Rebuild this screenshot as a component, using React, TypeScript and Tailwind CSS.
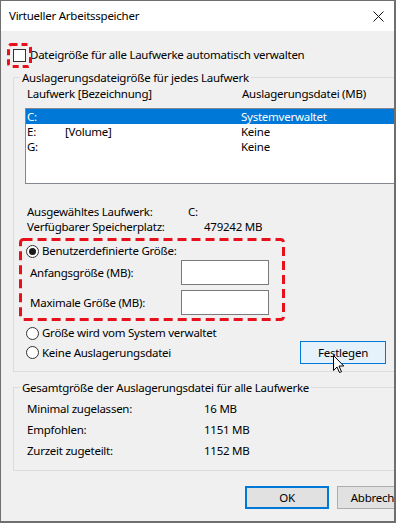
const Radio = ({ checked }: { checked?: boolean }) => (
  <span className="flex h-[13px] w-[13px] shrink-0 items-center justify-center rounded-full border border-[#333] bg-white">
    {checked && <span className="h-[7px] w-[7px] rounded-full bg-[#1a1a1a]" />}
  </span>
);

const DashedBox = ({ w, h, dash }: { w: number; h: number; dash: string }) => (
  <svg className="pointer-events-none absolute left-0 top-0" width={w} height={h}>
    <rect
      x={1.5}
      y={1.5}
      width={w - 3}
      height={h - 3}
      rx={3}
      fill="none"
      stroke="#e8111b"
      strokeWidth={3}
      strokeDasharray={dash}
    />
  </svg>
);

const drives = [
  { d: "C:", label: "", size: "Systemverwaltet", selected: true },
  { d: "E:", label: "[Volume]", size: "Keine" },
  { d: "G:", label: "", size: "Keine" },
];

const totals = [
  ["Minimal zugelassen:", "16 MB"],
  ["Empfohlen:", "1151 MB"],
  ["Zurzeit zugeteilt:", "1152 MB"],
];

export default function App() {
  return (
    <div className="h-[523px] w-[396px] overflow-hidden bg-white font-['Noto_Sans',sans-serif] text-[11.5px] tracking-[-0.25px] text-black">
      <div className="flex h-[523px] w-[396px] flex-col overflow-hidden border-b-2 border-l border-r-2 border-t border-[#6f6f6f] bg-[#f0f0f0]">
        {/* title bar */}
        <div className="flex h-[30px] shrink-0 items-center justify-between bg-white pl-[8px] pr-[10px]">
          <span className="leading-[16px]">Virtueller Arbeitsspeicher</span>
          <svg width="11" height="11" viewBox="0 0 11 11">
            <path d="M0.5 0.5 L10.5 10.5 M10.5 0.5 L0.5 10.5" stroke="#111" strokeWidth="1" />
          </svg>
        </div>

        <div className="w-[420px] pl-[12px]">
          {/* auto checkbox */}
          <div className="mt-[16px] flex h-[16px] items-center gap-[4px] leading-[16px]">
            <span className="relative h-[13px] w-[13px] shrink-0 border border-[#333] bg-white">
              <span className="absolute -left-[7px] -top-[7px]">
                <span className="relative block h-[25px] w-[25px]">
                  <DashedBox w={25} h={25} dash="6 4" />
                </span>
              </span>
            </span>
            <span>Dateigröße für alle Laufwerke automatisch verwalten</span>
          </div>

          {/* per drive group */}
          <fieldset className="mt-[7px] w-[400px] border border-[#dcdcdc] pb-[7px] pl-[6px]">
            <legend className="px-[2px] leading-[15px]">Auslagerungsdateigröße für jedes Laufwerk</legend>
            <div className="ml-[7px] mt-[1px] flex leading-[16px]">
              <span className="w-[215px]">Laufwerk [Bezeichnung]</span>
              <span>Auslagerungsdatei (MB)</span>
            </div>
            <div className="ml-[5px] mt-[6px] h-[76px] w-[380px] border border-[#828790] bg-white">
              {drives.map((r) => (
                <div
                  key={r.d}
                  className={`flex h-[15px] pl-[1px] leading-[15px] ${r.selected ? "bg-[#0078d7] text-white" : ""}`}
                >
                  <span className="w-[38px]">{r.d}</span>
                  <span className="w-[176px]">{r.label}</span>
                  <span>{r.size}</span>
                </div>
              ))}
            </div>

            <div className="ml-[7px] mt-[20px] leading-[15px]">
              <div className="flex">
                <span className="w-[161px]">Ausgewähltes Laufwerk:</span>
                <span>C:</span>
              </div>
              <div className="flex">
                <span className="w-[177px]">Verfügbarer Speicherplatz:</span>
                <span>479242 MB</span>
              </div>
            </div>

            {/* custom size, marked */}
            <div className="relative -ml-[1px] mt-[4px] h-[83px] w-[266px] pt-[5px]">
              <DashedBox w={266} h={83} dash="9 5" />
              <div className="ml-[7px] flex h-[16px] items-center gap-[3px] leading-[16px]">
                <Radio checked />
                <span>Benutzerdefinierte Größe:</span>
              </div>
              <div className="ml-[11px] mt-[1px] flex h-[25px] items-center">
                <span className="w-[151px]">Anfangsgröße (MB):</span>
                <div className="h-[25px] w-[88px] border border-[#7a7a7a] bg-white" />
              </div>
              <div className="ml-[11px] mt-[5px] flex h-[25px] items-center">
                <span className="w-[151px]">Maximale Größe (MB):</span>
                <div className="h-[25px] w-[88px] border border-[#7a7a7a] bg-white" />
              </div>
            </div>

            <div className="ml-[6px] mt-[4px] flex h-[16px] items-center gap-[3px] leading-[16px]">
              <Radio />
              <span>Größe wird vom System verwaltet</span>
            </div>
            <div className="ml-[6px] flex h-[23px] items-center">
              <div className="flex w-[274px] items-center gap-[3px]">
                <Radio />
                <span>Keine Auslagerungsdatei</span>
              </div>
              <div className="relative flex h-[23px] w-[86px] items-center justify-center border border-[#0078d7] bg-[#e5f1fb]">
                Festlegen
                <svg className="absolute left-[32px] top-[13px]" width="12" height="19" viewBox="0 0 12 19">
                  <path
                    d="M0.5 0.5 L0.5 15.5 L4 12 L6.5 17.5 L8.5 16.7 L6 11 L10.8 11 Z"
                    fill="white"
                    stroke="black"
                    strokeWidth="1"
                    strokeLinejoin="miter"
                  />
                </svg>
              </div>
            </div>
          </fieldset>

          {/* totals group */}
          <fieldset className="mt-[8px] w-[400px] border border-[#dcdcdc] pb-[9px] pl-[6px]">
            <legend className="px-[2px] leading-[15px]">Gesamtgröße der Auslagerungsdatei für alle Laufwerke</legend>
            <div className="ml-[7px] mt-[3px]">
              {totals.map(([k, v]) => (
                <div key={k} className="flex h-[21px] leading-[21px]">
                  <span className="w-[177px]">{k}</span>
                  <span>{v}</span>
                </div>
              ))}
            </div>
          </fieldset>

          <div className="ml-[232px] mt-[15px] flex gap-[8px]">
            <div className="flex h-[23px] w-[85px] items-center justify-center border-2 border-[#0078d7] bg-[#e1e1e1]">OK</div>
            <div className="flex h-[23px] w-[85px] items-center justify-center border border-[#adadad] bg-[#e1e1e1]">
              Abbrechen
            </div>
          </div>
        </div>
      </div>
    </div>
  );
}
